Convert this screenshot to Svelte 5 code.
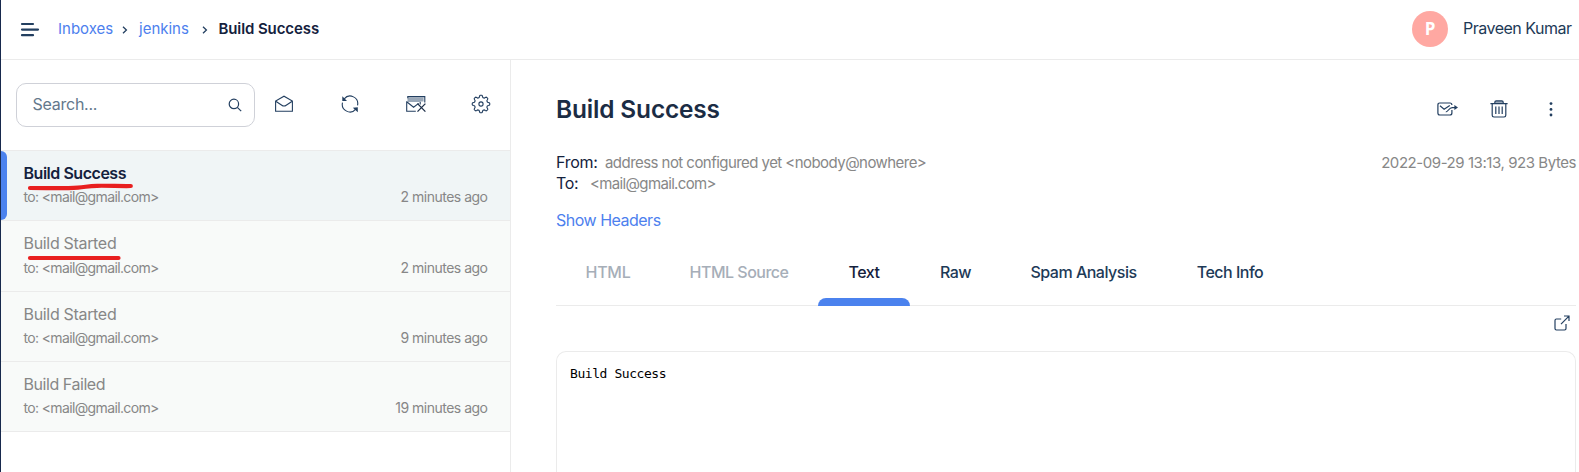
<script>
  const messages = [
    { subject: 'Build Success', to: 'to: <mail@gmail.com>', age: '2 minutes ago', active: true },
    { subject: 'Build Started', to: 'to: <mail@gmail.com>', age: '2 minutes ago', tall: true },
    { subject: 'Build Started', to: 'to: <mail@gmail.com>', age: '9 minutes ago' },
    { subject: 'Build Failed', to: 'to: <mail@gmail.com>', age: '19 minutes ago' }
  ];
  const tabs = [
    { label: 'HTML', width: 104, state: 'disabled first' },
    { label: 'HTML Source', width: 158, state: 'disabled' },
    { label: 'Text', width: 92, state: 'current' },
    { label: 'Raw', width: 91, state: '' },
    { label: 'Spam Analysis', width: 165, state: '' },
    { label: 'Tech Info', width: 128, state: '' }
  ];
  // Outline of the settings cog: eight rounded teeth around the centre.
  const cog = (() => {
    let d = '';
    for (let i = 0; i <= 96; i++) {
      const a = (i / 96) * Math.PI * 2;
      const r = 7.7 + 1.1 * Math.tanh(2.2 * Math.cos(8 * a));
      d += (i ? 'L' : 'M') + (10 + r * Math.sin(a)).toFixed(2) + ' ' + (10 - r * Math.cos(a)).toFixed(2);
    }
    return d + 'Z';
  })();
</script>

<div class="app">
  <header>
    <svg class="burger" width="20" height="16" viewBox="0 0 20 16"><path d="M2 2H13M2 7.6H18M2 13.2H13" /></svg>
    <nav>
      <a class="c1" href="#inboxes">Inboxes</a>
      <svg class="chev" width="6" height="8" viewBox="0 0 6 8"><path d="M1 .8L4.4 4L1 7.2" /></svg>
      <a class="c2" href="#jenkins">jenkins</a>
      <svg class="chev" width="6" height="8" viewBox="0 0 6 8"><path d="M1 .8L4.4 4L1 7.2" /></svg>
      <strong>Build Success</strong>
    </nav>
    <div class="avatar">P</div>
    <span class="user">Praveen Kumar</span>
  </header>

  <div class="body">
    <aside>
      <div class="tools">
        <div class="search">
          <span>Search...</span>
          <svg width="14" height="14" viewBox="0 0 14 14"><circle cx="5.9" cy="5.9" r="4.7" /><path d="M9.3 9.3L13.2 13.2" /></svg>
        </div>
        <svg class="ic open" width="20" height="20" viewBox="0 0 20 20"><path d="M1.6 7V17.2H18.4V7L10 2.2ZM1.8 7.3L7.8 11.3Q10 12.8 12.2 11.3L18.2 7.3" /></svg>
        <svg class="ic sync" width="20" height="20" viewBox="0 0 20 20"><path d="M4.2 4.9A7.6 7.6 0 0 1 17.5 11.4M15.8 15.1A7.6 7.6 0 0 1 2.5 8.6" /><path class="fill" d="M2.3 2.2V6.9H7ZM17.8 18.2V13.2L12.8 13.7Z" /></svg>
        <svg class="ic clear" width="22" height="20" viewBox="0 0 22 20"><path class="pale" d="M2.5 3.6H18.6V7.6H15.6V8H2.5Z" /><path d="M1.7 7.4V17.3H10.8M2 8L8.6 13.2L13.6 9.4M1.7 8V7.2M2.8 4.2V2.6H19.8V8.4M15.2 8V10.4" /><path class="cross" d="M12.5 9.6L20.4 17.6M20.4 9.6L12.5 17.6" /></svg>
        <svg class="ic gear" width="20" height="20" viewBox="0 0 20 20"><path d={cog} /><circle cx="10" cy="10" r="2.1" /></svg>
      </div>
      <div class="list">
        {#each messages as m}
          <div class="row" class:active={m.active} class:tall={m.tall}>
            <div class="bar"></div>
            <div class="info">
              <div class="subject" class:failed={m.subject === 'Build Failed'}>{m.subject}</div>
              <div class="meta"><span class="to">{m.to}</span><span>{m.age}</span></div>
            </div>
          </div>
        {/each}
        <svg class="marks" width="140" height="120" viewBox="0 0 140 120">
          <path d="M30 38C50 38 64 38.6 78 37.6C86 37 88 36 97 35.8C109 35.6 120 36.2 130.8 36" />
          <path d="M30 108H118.5" />
        </svg>
      </div>
    </aside>

    <main>
      <div class="heading">
        <h1>Build Success</h1>
        <svg class="ic fwd" width="24" height="20" viewBox="0 0 24 20"><path d="M15.9 11V14Q15.9 16 13.9 16H3.8Q1.9 16 1.9 14V6Q1.9 4 3.8 4H13.9Q15.9 4 15.9 6M4 6.8L8.1 10.2L13.8 6.4M9.8 13C12.5 12.8 12.6 8.6 16.2 8.6H19" /><path class="fill" d="M18.4 6L22 8.6L18.4 11Z" /></svg>
        <svg class="ic bin" width="20" height="20" viewBox="0 0 20 20"><path class="pale" d="M6 2H14V4H6Z" /><path d="M1.4 4.6H18.6M5.8 4.4V3.2Q5.8 1.8 7.2 1.8H12.8Q14.2 1.8 14.2 3.2V4.4M3.2 4.8V16.3Q3.2 18 4.9 18H15.1Q16.8 18 16.8 16.3V4.8M6.8 7.4V15M10 7.4V15M13.2 7.4V15" /></svg>
        <svg class="ic dots" width="6" height="20" viewBox="0 0 6 20"><g class="fill"><circle cx="3" cy="4.6" r="1.4" /><circle cx="3" cy="10.4" r="1.4" /><circle cx="3" cy="16" r="1.4" /></g></svg>
      </div>
      <div class="line from"><b>From:</b><span class="addr">address not configured yet &lt;nobody@nowhere></span><span class="date">2022-09-29 13:13, 923 Bytes</span></div>
      <div class="line"><b class="tolabel">To:</b><span class="mail">&lt;mail@gmail.com></span></div>
      <a class="headers" href="#headers">Show Headers</a>
      <div class="tabs">
        {#each tabs as t}
          <div class="tab {t.state}" style="width:{t.width}px">{t.label}</div>
        {/each}
      </div>
      <div class="popout">
        <svg class="ic" width="16" height="16" viewBox="0 0 16 16"><path d="M7.2 4H2.4Q1 4 1 5.4V13.6Q1 15 2.4 15H10.6Q12 15 12 13.6V9M7 9.2L14.7 1.4M10 1H15V6" /></svg>
      </div>
      <pre>Build Success</pre>
    </main>
  </div>
</div>

<style>
  :global(body) { margin: 0; background: #fff; overflow: hidden; }
  .app { box-sizing: border-box; height: 472px; border-left: 1px solid #17294d; font-family: Inter, sans-serif; font-size: 16px; color: #1d3a57; display: flex; flex-direction: column; overflow: hidden; }
  a { color: #4d80ee; text-decoration: none; }
  svg { flex: none; display: block; fill: none; stroke: #233f60; stroke-width: 1.2; }
  .fill { fill: #233f60; stroke: none; }
  .pale { fill: #9aa8b8; stroke: none; }
  header { box-sizing: border-box; height: 60px; flex: none; border-bottom: 1px solid #ebebeb; display: flex; align-items: center; padding-right: 7px; }
  .burger { margin-left: 18.5px; stroke-width: 2.2; stroke-linecap: round; }
  nav { flex: 1; display: flex; align-items: center; margin-left: 18.5px; font-size: 15px; line-height: 20px; height: 20px; margin-top: -2px; }
  .c1 { width: 64px; }
  .c2 { width: 63px; margin-left: 11px; }
  .chev { margin-top: 3px; stroke-width: 1.3; }
  nav strong { font-weight: 600; margin-left: 10.5px; color: #14213d; letter-spacing: -.1px; }
  .avatar { width: 36px; height: 36px; margin-top: -1px; border-radius: 50%; background: #ffa8a2; color: #fff; font: 700 17px/35px "Open Sans", sans-serif; text-align: center; }
  .user { margin-left: 15px; width: 109px; letter-spacing: -.5px; line-height: 20px; margin-top: -3px; white-space: nowrap; }
  .body { flex: 1; display: flex; min-height: 0; }
  aside { box-sizing: border-box; width: 510px; flex: none; border-right: 1px solid #ebebeb; }
  .tools { height: 90px; box-sizing: border-box; display: flex; align-items: flex-start; padding: 23px 0 0 15px; }
  .search { box-sizing: border-box; width: 239px; height: 44px; border: 1px solid #cfd1d8; border-radius: 10px; display: flex; align-items: center; justify-content: space-between; padding: 0 12px 0 15.5px; }
  .search span { color: #64788c; letter-spacing: -.25px; margin-top: -2px; }
  .tools .ic { margin-top: 11px; stroke-width: 1.1; }
  .open { margin-left: 19px; }
  .sync { margin-left: 46px; }
  .clear { margin-left: 45px; }
  .gear { margin-left: 44px; }
  .cross { stroke-width: 1.3; stroke: #1c2e48; }
  .list { position: relative; border-bottom: 1px solid #ebebeb; }
  .row { box-sizing: border-box; height: 70px; border-top: 1px solid #ebebeb; background: #f8faf9; display: flex; }
  .row.tall { height: 71px; }
  .row.active { background: #f0f5f6; }
  .bar { width: 6px; border-radius: 0 6px 6px 0; }
  .active .bar { background: #4b82ee; }
  .info { flex: 1; padding: 11px 22.5px 0 16.5px; color: #878787; }
  .subject { line-height: 22px; letter-spacing: -.32px; }
  .failed { letter-spacing: -.44px; }
  .active .subject { font-weight: 600; color: #14213d; letter-spacing: -.47px; }
  .meta { margin-top: 3px; display: flex; justify-content: space-between; font-size: 14px; line-height: 20px; letter-spacing: -.5px; }
  .tall .meta { margin-top: 4px; }
  .to { letter-spacing: -.64px; }
  .marks { position: absolute; left: -1px; top: 0; stroke: #e81f1f; stroke-width: 4.2; stroke-linecap: round; }
  main { flex: 1; min-width: 0; padding: 34px 3px 0 45px; display: flex; flex-direction: column; }
  .heading { display: flex; height: 30px; align-items: center; padding-right: 22px; flex: none; }
  h1 { margin: 0; flex: 1; font-size: 24.4px; line-height: 30px; font-weight: 600; letter-spacing: -.13px; color: #1b2c44; }
  .bin { margin-left: 29px; }
  .dots { margin-left: 39px; }
  .line { display: flex; line-height: 21px; height: 21px; flex: none; font-size: 15px; letter-spacing: -.55px; color: #878787; white-space: nowrap; }
  .from { margin-top: 28px; }
  .line b { font-weight: 400; font-size: 16px; width: 49px; letter-spacing: -.3px; color: #14213d; }
  .line b.tolabel { width: 34px; }
  .mail { letter-spacing: -.65px; }
  .date { margin-left: auto; letter-spacing: -.44px; }
  .headers { margin-top: 16px; line-height: 20px; letter-spacing: -.5px; }
  .tabs { box-sizing: border-box; margin-top: 32px; height: 44px; flex: none; border-bottom: 1px solid #ebebeb; display: flex; }
  .tab { height: 44px; line-height: 20px; text-align: center; font-weight: 500; letter-spacing: -.5px; display: flex; flex-direction: column; justify-content: space-between; }
  .first { letter-spacing: -.3px; }
  .disabled { color: #a6aeb8; }
  .current { color: #14213d; }
  .current::after { content: ""; height: 8px; background: #4b82ee; border-radius: 8px 8px 0 0; }
  .popout { height: 45px; flex: none; display: flex; justify-content: flex-end; padding: 9px 6px 0 0; box-sizing: border-box; }
  pre { flex: 1; margin: 0; border: 1px solid #ebebeb; border-bottom: 0; border-radius: 10px 10px 0 0; padding: 14px 13px 0; font: 13px/16px "DejaVu Sans Mono", monospace; letter-spacing: -.43px; color: #000; }
</style>
